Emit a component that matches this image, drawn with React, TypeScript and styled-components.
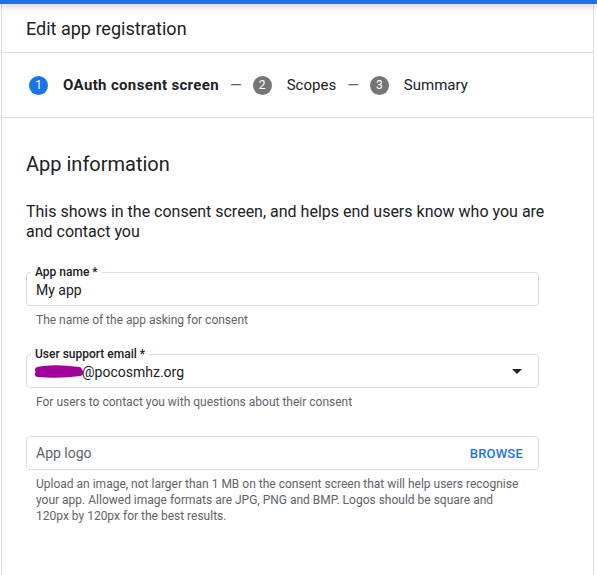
import React from "react";
import styled, { createGlobalStyle } from "styled-components";

const Global = createGlobalStyle`
  html, body { margin: 0; padding: 0; background: #fff; }
  body { font-family: Roboto, "Noto Sans", Arial, sans-serif; color: #202124; }
`;

const Page = styled.div`
  width: 597px;
  height: 575px;
  overflow: hidden;
  position: relative;
  background: #fff;
`;

const TopBar = styled.div`
  height: 4px;
  background: #1a73e8;
  box-shadow: 0 2px 6px rgba(60, 64, 67, 0.35);
  position: relative;
  z-index: 1;
`;

const Panel = styled.div`
  margin-left: 1px;
  width: 593px;
  box-sizing: border-box;
  border-left: 1px solid #dadce0;
  border-right: 1px solid #dadce0;
  height: 571px;
  display: flex;
  flex-direction: column;
`;

const Header = styled.div`
  height: 49px;
  box-sizing: border-box;
  border-bottom: 1px solid #dadce0;
  display: flex;
  align-items: center;
  padding-left: 24px;
  font-size: 18px;
  color: #202124;
`;

const Stepper = styled.div`
  height: 65px;
  box-sizing: border-box;
  border-bottom: 1px solid #dadce0;
  display: flex;
  align-items: center;
  padding-left: 27px;
  font-size: 15px;
`;

const StepNum = styled.span<{ $active?: boolean }>`
  width: 19px;
  height: 19px;
  border-radius: 50%;
  background: ${(p) => (p.$active ? "#1a73e8" : "#757575")};
  color: #fff;
  font-size: 12px;
  display: inline-flex;
  align-items: center;
  justify-content: center;
  margin-right: 15px;
`;

const StepLabel = styled.span<{ $active?: boolean }>`
  font-weight: ${(p) => (p.$active ? 700 : 400)};
  letter-spacing: ${(p) => (p.$active ? "0.35px" : "0")};
  color: #202124;
`;

const Dash = styled.span`
  color: #5f6368;
  margin: 0 11px;
`;

const Body = styled.div`
  padding: 33px 40px 0 24px;
  display: flex;
  flex-direction: column;
`;

const Title = styled.h2`
  margin: 0;
  font-size: 20px;
  font-weight: 400;
  line-height: 26px;
  color: #202124;
`;

const Intro = styled.p`
  margin: 25px 0 0;
  font-size: 16px;
  line-height: 20px;
  color: #202124;
`;

const Field = styled.div<{ $top: number }>`
  margin-top: ${(p) => p.$top}px;
  position: relative;
`;

const Box = styled.div`
  height: 34px;
  box-sizing: border-box;
  border: 1px solid #dadce0;
  border-radius: 4px;
  display: flex;
  align-items: center;
  padding: 0 14px 0 9px;
  font-size: 14px;
  color: #202124;
  width: 513px;
`;

const FloatLabel = styled.span`
  position: absolute;
  top: -7px;
  left: 5px;
  padding: 0 4px;
  background: #fff;
  font-size: 12px;
  font-weight: 500;
  line-height: 14px;
  color: #202124;
`;

const Value = styled.span`
  flex: 1;
  padding-top: 2px;
  display: flex;
  align-items: center;
`;

const Placeholder = styled.span`
  flex: 1;
  color: #5f6368;
`;

const Browse = styled.span`
  color: #1a73e8;
  font-weight: 500;
  font-size: 13px;
  letter-spacing: 0.2px;
  margin-right: 1px;
`;

const Helper = styled.div<{ $w?: number }>`
  margin-top: 6px;
  padding-left: 10px;
  font-size: 12px;
  line-height: 16px;
  color: #5f6368;
  width: ${(p) => p.$w ?? 500}px;
`;

const Arrow = styled.span`
  width: 0;
  height: 0;
  border-left: 5px solid transparent;
  border-right: 5px solid transparent;
  border-top: 5px solid #202124;
  margin-right: 2px;
`;

const Redact = () => (
  <svg width="50" height="14" viewBox="0 0 50 14" style={{ marginLeft: -3, marginRight: -1 }}>
    <path
      d="M5 5 C 14 3, 30 3, 46 5 M5 9 C 18 10, 32 10, 47 8 M6 7 C 20 6, 36 7, 47 7"
      stroke="#a0009a"
      strokeWidth="6"
      strokeLinecap="round"
      fill="none"
    />
  </svg>
);

export default function App() {
  return (
    <>
      <Global />
      <Page>
        <TopBar />
        <Panel>
          <Header>Edit app registration</Header>
          <Stepper>
            <StepNum $active>1</StepNum>
            <StepLabel $active>OAuth consent screen</StepLabel>
            <Dash>—</Dash>
            <StepNum>2</StepNum>
            <StepLabel>Scopes</StepLabel>
            <Dash>—</Dash>
            <StepNum>3</StepNum>
            <StepLabel>Summary</StepLabel>
          </Stepper>
          <Body>
            <Title>App information</Title>
            <Intro>
              This shows in the consent screen, and helps end users know who you are and contact you
            </Intro>
            <Field $top={30}>
              <Box>
                <FloatLabel>App name *</FloatLabel>
                <Value>My app</Value>
              </Box>
              <Helper>The name of the app asking for consent</Helper>
            </Field>
            <Field $top={26}>
              <Box>
                <FloatLabel>User support email *</FloatLabel>
                <Value>
                  <Redact />
                  @pocosmhz.org
                </Value>
                <Arrow />
              </Box>
              <Helper>For users to contact you with questions about their consent</Helper>
            </Field>
            <Field $top={26}>
              <Box>
                <Placeholder>App logo</Placeholder>
                <Browse>BROWSE</Browse>
              </Box>
              <Helper $w={486}>
                Upload an image, not larger than 1 MB on the consent screen that will help users recognise your app.
                Allowed image formats are JPG, PNG and BMP. Logos should be square and 120px by 120px for the best
                results.
              </Helper>
            </Field>
          </Body>
        </Panel>
      </Page>
    </>
  );
}
